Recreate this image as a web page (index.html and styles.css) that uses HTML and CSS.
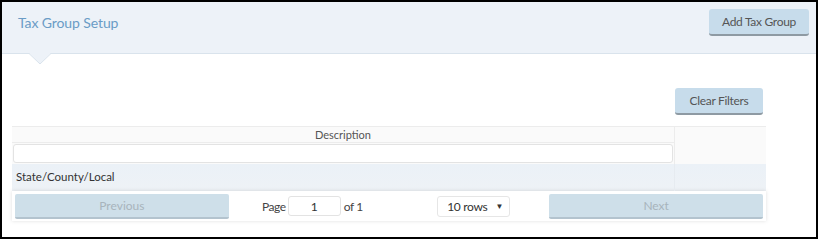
FILE: index.html
```html
<!DOCTYPE html>
<html>
<head>
<meta charset="utf-8">
<link rel="stylesheet" href="styles.css">
</head>
<body>
<div class="frame">
  <div class="header">
    <div class="title">Tax Group Setup</div>
    <button class="btn btn-add">Add Tax Group</button>
    <svg class="caret" width="22" height="12" viewBox="0 0 22 12">
      <polygon points="0,0 22,0 11,11" fill="#edf2f8"/>
      <polyline points="0,0.5 11,11 22,0.5" fill="none" stroke="#d9e3ec" stroke-width="1"/>
    </svg>
  </div>
  <div class="content">
    <div class="toolbar">
      <button class="btn btn-clear">Clear Filters</button>
    </div>
    <div class="table">
      <div class="thead">
        <div class="col-main">
          <div class="th">Description</div>
          <div class="filter"><input class="filter-input" type="text"></div>
        </div>
        <div class="col-fill"></div>
      </div>
      <div class="row">
        <div class="cell-main">State/County/Local</div>
        <div class="cell-fill"></div>
      </div>
      <div class="pagination">
        <div class="pg-prev"><button class="pg-btn">Previous</button></div>
        <div class="pg-center">
          <span class="page-info">Page <input class="page-input" type="text" value="1"> of 1</span>
          <span class="page-size">10 rows <span class="arrow">▼</span></span>
        </div>
        <div class="pg-next"><button class="pg-btn">Next</button></div>
      </div>
    </div>
  </div>
</div>
</body>
</html>
```

FILE: styles.css
```css
html, body {
  margin: 0;
  padding: 0;
  background: #fff;
}
body {
  font-family: Lato, "Open Sans", Arial, sans-serif;
}
.frame {
  width: 818px;
  height: 239px;
  box-sizing: border-box;
  border: 2px solid #000;
  background: #fff;
  overflow: hidden;
}
.header {
  position: relative;
  height: 52px;
  box-sizing: border-box;
  background: #edf2f8;
  border-bottom: 1px solid #d9e3ec;
  display: flex;
  justify-content: space-between;
  align-items: flex-start;
  padding: 7px 7px 0 16px;
}
.title {
  font-size: 14px;
  color: #6a9cc6;
  margin-top: 5px;
  letter-spacing: -0.1px;
}
.caret {
  position: absolute;
  left: 27px;
  top: 51px;
}
.btn {
  font-family: Lato, "Open Sans", Arial, sans-serif;
  font-size: 12px;
  color: #555;
  background: #c7dceb;
  border: none;
  border-bottom: 2px solid #8e9aa3;
  border-radius: 3px;
  height: 27px;
  padding: 0;
  letter-spacing: -0.3px;
}
.btn-add {
  width: 100px;
}
.content {
  padding: 0 0 0 10px;
}
.toolbar {
  display: flex;
  justify-content: flex-end;
  width: 751px;
  margin-top: 34px;
}
.btn-clear {
  width: 88px;
}
.table {
  margin-top: 11px;
  width: 754px;
  font-size: 11px;
  color: #444;
}
.thead {
  display: flex;
  border-top: 1px solid #ececec;
}
.col-main {
  width: 662px;
  border-right: 1px solid #ececec;
  background: #fafafa;
}
.th {
  height: 15px;
  line-height: 15px;
  text-align: center;
  border-bottom: 1px solid #ececec;
  color: #555;
}
.filter {
  padding: 1px;
}
.filter-input {
  display: block;
  width: 100%;
  height: 19px;
  box-sizing: border-box;
  border: 1px solid #e3e3e3;
  border-radius: 3px;
  background: #fff;
  margin: 0;
}
.col-fill {
  flex: 1;
  background: #fafafa;
}
.row {
  display: flex;
  height: 27px;
  background: linear-gradient(#ebf1f7, #eef2f6);
}
.cell-main {
  width: 658px;
  padding-left: 4px;
  line-height: 26px;
  font-size: 11.5px;
  color: #333;
  border-right: 1px solid #e6ebf0;
}
.cell-fill {
  flex: 1;
}
.pagination {
  display: flex;
  padding: 3px;
  height: 30px;
  box-sizing: border-box;
  background: #fff;
  box-shadow: 0 0 4px rgba(0,0,0,0.13);
  align-items: stretch;
}
.pg-prev, .pg-next {
  flex: 1;
  display: flex;
}
.pg-center {
  flex: 1.5;
  display: flex;
  justify-content: space-around;
  align-items: center;
  font-size: 12px;
  color: #444;
}
.pg-btn {
  flex: 1;
  font-family: Lato, "Open Sans", Arial, sans-serif;
  font-size: 12px;
  color: #a8b4bc;
  background: #cedfe9;
  border: none;
  border-bottom: 2px solid #b3c3ce;
  border-radius: 2px;
  padding: 0;
  height: 25px;
}
.page-info {
  display: flex;
  align-items: center;
  letter-spacing: -0.4px;
  margin-left: -6px;
}
.page-input {
  width: 53px;
  height: 20px;
  box-sizing: border-box;
  margin: 0 3px 0 2px;
  border: 1px solid #e3e3e3;
  border-radius: 3px;
  text-align: center;
  font-family: Lato, "Open Sans", Arial, sans-serif;
  font-size: 12px;
  color: #333;
  padding: 0;
}
.page-size {
  width: 73px;
  height: 21px;
  box-sizing: border-box;
  border: 1px solid #e6e6e6;
  border-radius: 3px;
  display: flex;
  align-items: center;
  justify-content: space-between;
  padding: 0 6px 0 9px;
  color: #333;
  letter-spacing: -0.3px;
  margin-left: -4px;
}
.arrow {
  font-size: 8px;
}
```
